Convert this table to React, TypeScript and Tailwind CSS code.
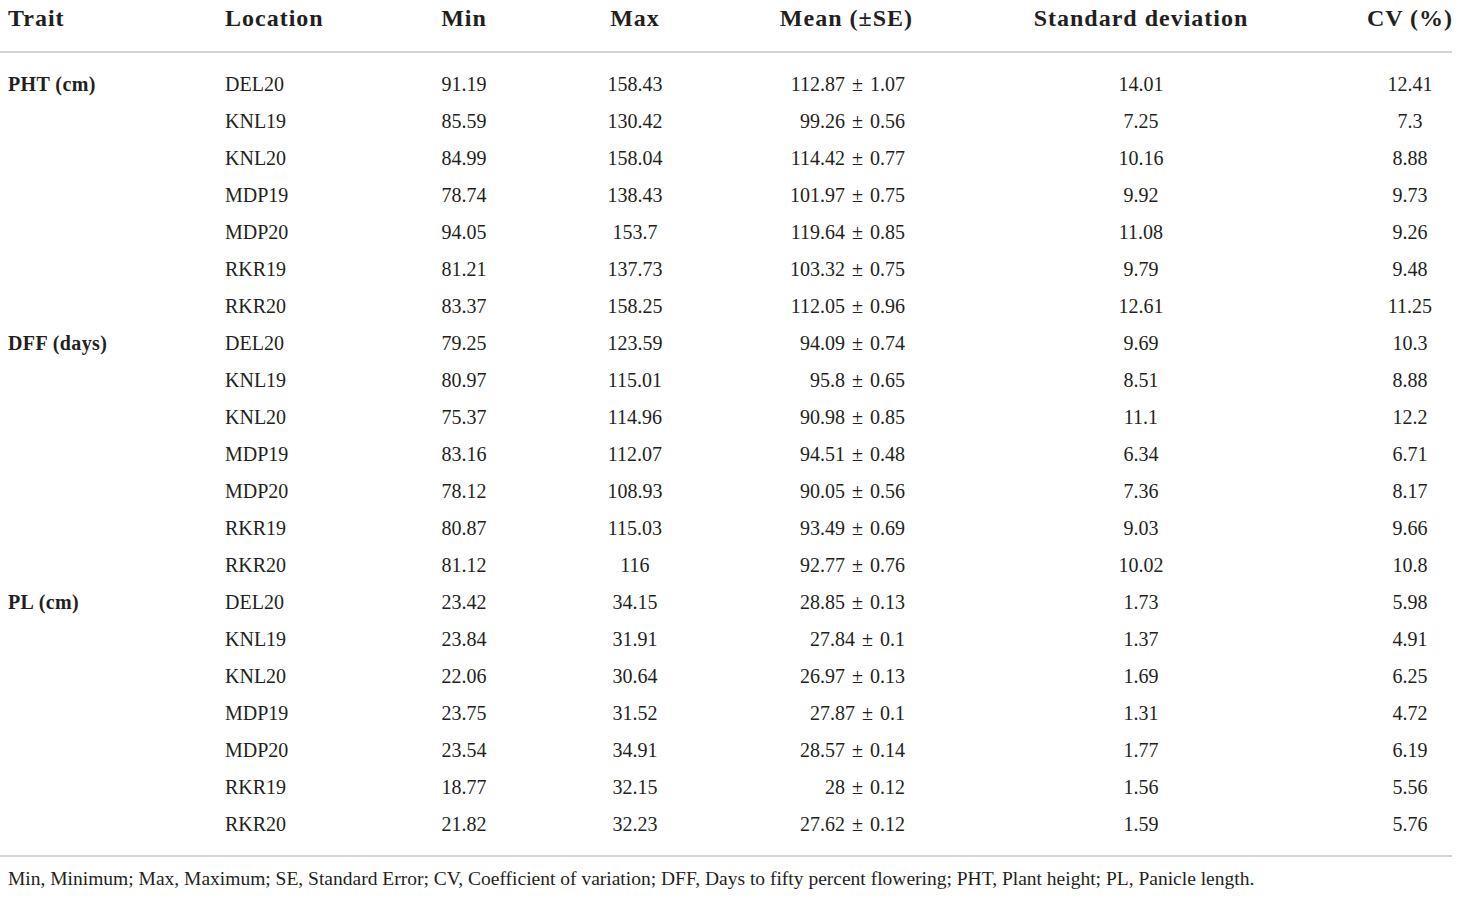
const rows: [string, string, string, string, string, string, string][] = [
  ["PHT (cm)", "DEL20", "91.19", "158.43", "112.87 ± 1.07", "14.01", "12.41"],
  ["", "KNL19", "85.59", "130.42", "99.26 ± 0.56", "7.25", "7.3"],
  ["", "KNL20", "84.99", "158.04", "114.42 ± 0.77", "10.16", "8.88"],
  ["", "MDP19", "78.74", "138.43", "101.97 ± 0.75", "9.92", "9.73"],
  ["", "MDP20", "94.05", "153.7", "119.64 ± 0.85", "11.08", "9.26"],
  ["", "RKR19", "81.21", "137.73", "103.32 ± 0.75", "9.79", "9.48"],
  ["", "RKR20", "83.37", "158.25", "112.05 ± 0.96", "12.61", "11.25"],
  ["DFF (days)", "DEL20", "79.25", "123.59", "94.09 ± 0.74", "9.69", "10.3"],
  ["", "KNL19", "80.97", "115.01", "95.8 ± 0.65", "8.51", "8.88"],
  ["", "KNL20", "75.37", "114.96", "90.98 ± 0.85", "11.1", "12.2"],
  ["", "MDP19", "83.16", "112.07", "94.51 ± 0.48", "6.34", "6.71"],
  ["", "MDP20", "78.12", "108.93", "90.05 ± 0.56", "7.36", "8.17"],
  ["", "RKR19", "80.87", "115.03", "93.49 ± 0.69", "9.03", "9.66"],
  ["", "RKR20", "81.12", "116", "92.77 ± 0.76", "10.02", "10.8"],
  ["PL (cm)", "DEL20", "23.42", "34.15", "28.85 ± 0.13", "1.73", "5.98"],
  ["", "KNL19", "23.84", "31.91", "27.84 ± 0.1", "1.37", "4.91"],
  ["", "KNL20", "22.06", "30.64", "26.97 ± 0.13", "1.69", "6.25"],
  ["", "MDP19", "23.75", "31.52", "27.87 ± 0.1", "1.31", "4.72"],
  ["", "MDP20", "23.54", "34.91", "28.57 ± 0.14", "1.77", "6.19"],
  ["", "RKR19", "18.77", "32.15", "28 ± 0.12", "1.56", "5.56"],
  ["", "RKR20", "21.82", "32.23", "27.62 ± 0.12", "1.59", "5.76"],
];

const cols = "grid grid-cols-[217px_175px_128px_214px_178px_442px_96px] pl-2";

export default function App() {
  return (
    <div className="w-[1460px] h-[898px] bg-white text-[#231f20] font-['Liberation_Serif',serif] overflow-hidden">
      <div className={`${cols} h-[36px] items-center text-[24px] font-bold tracking-[1px]`}>
        <div>Trait</div>
        <div>Location</div>
        <div className="text-center">Min</div>
        <div className="text-center">Max</div>
        <div className="text-right pr-[7px]">Mean (±SE)</div>
        <div className="text-center">Standard deviation</div>
        <div className="text-center">CV (%)</div>
      </div>
      <div className="mt-[15px] h-[2px] w-[1452px] bg-[#d4d4d4]" />
      <div className="pt-[12px]">
        {rows.map((r, i) => (
          <div key={i} className={`${cols} h-[37px] items-center text-[20px]`}>
            <div className="font-bold tracking-[0.4px]">{r[0]}</div>
            <div>{r[1]}</div>
            <div className="text-center">{r[2]}</div>
            <div className="text-center">{r[3]}</div>
            <div className="text-right pr-[15px] [word-spacing:2px]">{r[4]}</div>
            <div className="text-center">{r[5]}</div>
            <div className="text-center">{r[6]}</div>
          </div>
        ))}
      </div>
      <div className="mt-[13px] h-[2px] w-[1452px] bg-[#d4d4d4]" />
      <div className="pl-2 mt-[12px] text-[19.5px] leading-[20px]">
        Min, Minimum; Max, Maximum; SE, Standard Error; CV, Coefficient of variation; DFF, Days to fifty percent flowering; PHT, Plant height; PL, Panicle length.
      </div>
    </div>
  );
}
